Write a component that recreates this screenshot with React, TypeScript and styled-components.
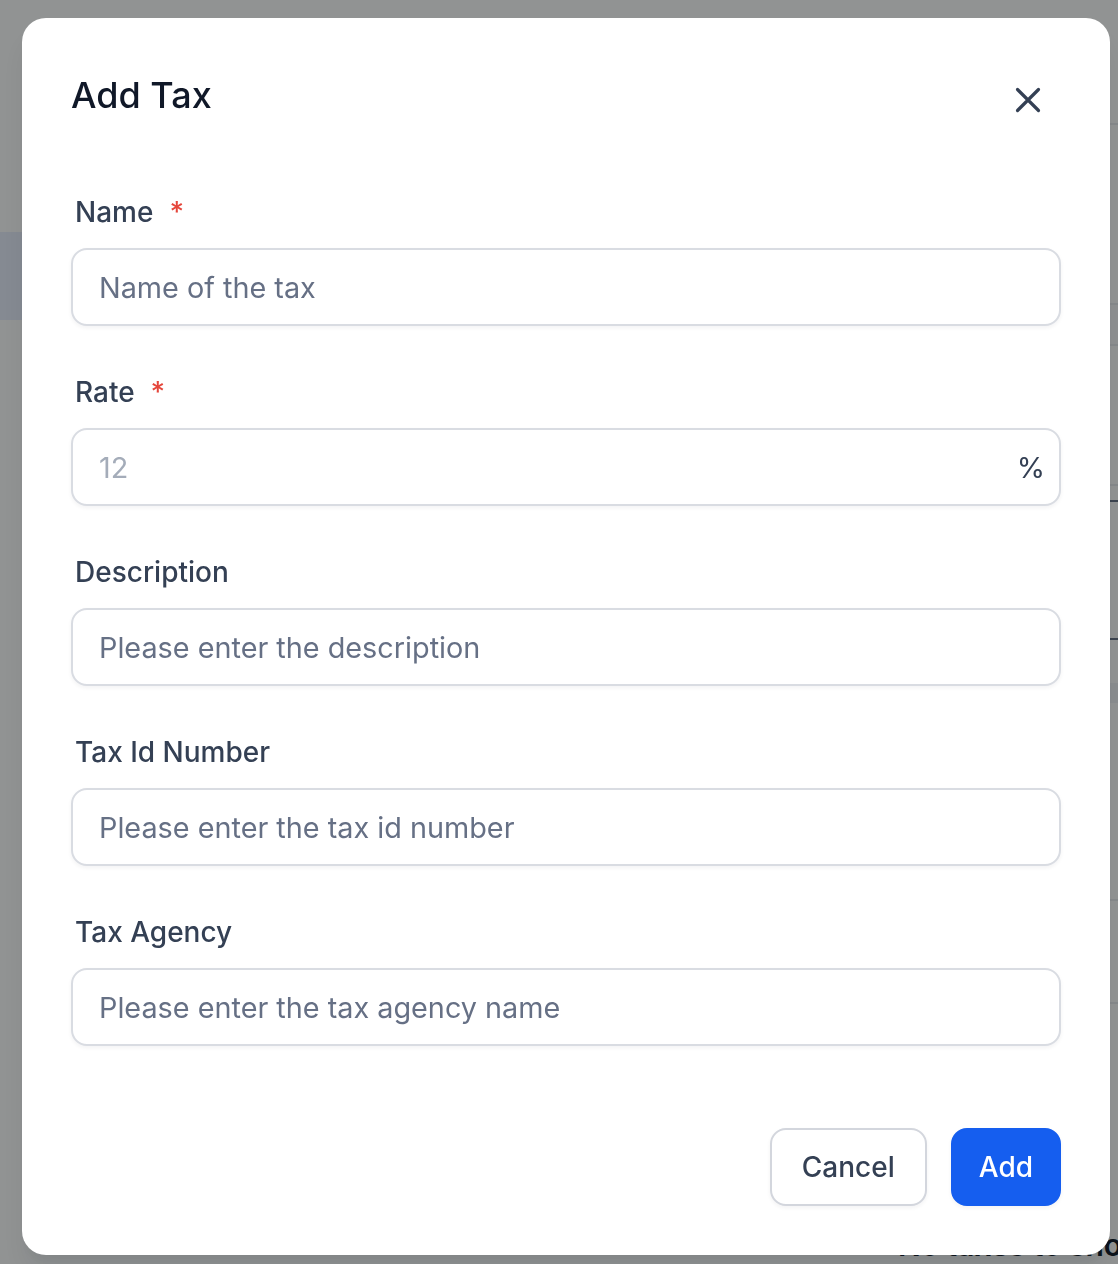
import styled, { createGlobalStyle } from 'styled-components';

const GlobalStyle = createGlobalStyle`
  html, body {
    margin: 0;
    padding: 0;
  }
  body {
    font-family: 'Inter', 'Noto Sans', sans-serif;
    overflow: hidden;
  }
  * {
    box-sizing: border-box;
  }
`;

/* ---------- page behind the dialog ---------- */

const Page = styled.div`
  display: flex;
  width: 100vw;
  height: 100vh;
  background: #fff;
`;

const Sidebar = styled.aside`
  width: 240px;
  flex-shrink: 0;
  padding-top: 232px;
`;

const NavItem = styled.div<{ $active?: boolean }>`
  height: 88px;
  background: ${(p) => (p.$active ? '#e9effd' : 'transparent')};
`;

const Main = styled.main`
  flex: 1;
  display: flex;
  flex-direction: column;
`;

const Band = styled.div<{ $h: number; $line?: string; $bg?: string }>`
  height: ${(p) => p.$h}px;
  flex-shrink: 0;
  background: ${(p) => p.$bg ?? 'transparent'};
  border-bottom: 2px solid ${(p) => p.$line ?? 'transparent'};
`;

const EmptyText = styled.div`
  padding-left: 658px;
  font-size: 30px;
  line-height: 36px;
  font-weight: 600;
  color: #101828;
  white-space: nowrap;
`;

const rows: { h: number; line?: string; bg?: string }[] = [
  { h: 125, line: '#eaecf0' },
  { h: 180, line: '#eaecf0' },
  { h: 41, line: '#eaecf0', bg: '#f9fafb' },
  { h: 140, line: '#eaecf0' },
  { h: 16, line: '#667085' },
  { h: 138, line: '#667085' },
  { h: 43 },
  { h: 20, bg: '#f2f4f7' },
  { h: 198, line: '#eaecf0' },
  { h: 103, line: '#eaecf0' },
  { h: 223 },
];

/* ---------- dialog ---------- */

const Backdrop = styled.div`
  position: fixed;
  inset: 0;
  display: flex;
  align-items: flex-start;
  padding: 18px 0 0 22px;
  background: rgba(10, 16, 16, 0.45);
`;

const Dialog = styled.div`
  width: 1088px;
  padding: 55px 49px 49px;
  background: #fff;
  border-radius: 24px;
  box-shadow: 0 20px 24px -4px rgba(16, 24, 40, 0.08),
    0 8px 8px -4px rgba(16, 24, 40, 0.03);
`;

const Header = styled.div`
  display: flex;
  justify-content: space-between;
  align-items: flex-start;
  margin-bottom: 70px;
`;

const Title = styled.h2`
  margin: 0;
  font-size: 36px;
  line-height: 44px;
  font-weight: 500;
  color: #101828;
`;

const CloseButton = styled.button`
  display: flex;
  align-items: center;
  justify-content: center;
  width: 44px;
  height: 44px;
  margin: 5px 11px 0 0;
  padding: 0;
  border: 0;
  background: none;
  color: #344054;
  cursor: pointer;
`;

const Form = styled.form`
  display: flex;
  flex-direction: column;
  gap: 46px;
`;

const Field = styled.div`
  display: flex;
  flex-direction: column;
  gap: 16px;
`;

const Label = styled.label`
  display: block;
  padding-left: 4px;
  font-size: 28px;
  line-height: 40px;
  font-weight: 500;
  color: #344054;
`;

const Required = styled.span`
  margin-left: 16px;
  color: #e5463b;
`;

const InputShell = styled.div`
  display: flex;
  align-items: center;
  height: 78px;
  padding: 0 14px 0 26px;
  background: #fff;
  border: 2px solid #d9dce2;
  border-radius: 16px;
  box-shadow: 0 2px 4px rgba(16, 24, 40, 0.05);
`;

const TextInput = styled.input<{ $muted?: boolean }>`
  flex: 1;
  min-width: 0;
  padding: 0;
  border: 0;
  outline: 0;
  background: transparent;
  font-family: inherit;
  font-size: 28.8px;
  color: #101828;

  &::placeholder {
    color: ${(p) => (p.$muted ? '#a4acb9' : '#667085')};
    opacity: 1;
  }
`;

const Suffix = styled.span`
  font-size: 28.8px;
  color: #344054;
`;

const Footer = styled.div`
  display: flex;
  justify-content: flex-end;
  gap: 24px;
  margin-top: 82px;
`;

const Button = styled.button<{ $primary?: boolean }>`
  height: 78px;
  padding: 0 ${(p) => (p.$primary ? 26 : 30)}px;
  border-radius: 16px;
  border: 2px solid ${(p) => (p.$primary ? '#155eef' : '#d3d6dd')};
  background: ${(p) => (p.$primary ? '#155eef' : '#fff')};
  color: ${(p) => (p.$primary ? '#fff' : '#344054')};
  font-family: inherit;
  font-size: 28px;
  font-weight: 500;
  box-shadow: 0 2px 4px rgba(16, 24, 40, 0.05);
  cursor: pointer;
`;

const CloseIcon = () => (
  <svg width="28" height="28" viewBox="0 0 28 28" fill="none">
    <path
      d="M3.5 3.5l21 21M24.5 3.5l-21 21"
      stroke="currentColor"
      strokeWidth="3.2"
      strokeLinecap="round"
    />
  </svg>
);

interface FieldDef {
  id: string;
  label: string;
  placeholder: string;
  required?: boolean;
  muted?: boolean;
  suffix?: string;
}

const fields: FieldDef[] = [
  { id: 'name', label: 'Name', placeholder: 'Name of the tax', required: true },
  { id: 'rate', label: 'Rate', placeholder: '12', required: true, muted: true, suffix: '%' },
  { id: 'description', label: 'Description', placeholder: 'Please enter the description' },
  { id: 'taxId', label: 'Tax Id Number', placeholder: 'Please enter the tax id number' },
  { id: 'agency', label: 'Tax Agency', placeholder: 'Please enter the tax agency name' },
];

export default function App() {
  return (
    <>
      <GlobalStyle />
      <Page>
        <Sidebar>
          <NavItem $active />
        </Sidebar>
        <Main>
          {rows.map((r, i) => (
            <Band key={i} $h={r.h} $line={r.line} $bg={r.bg} />
          ))}
          <EmptyText>No taxes to show</EmptyText>
        </Main>
      </Page>
      <Backdrop>
        <Dialog role="dialog" aria-labelledby="add-tax-title">
          <Header>
            <Title id="add-tax-title">Add Tax</Title>
            <CloseButton type="button" aria-label="Close">
              <CloseIcon />
            </CloseButton>
          </Header>
          <Form onSubmit={(e) => e.preventDefault()}>
            {fields.map((f) => (
              <Field key={f.id}>
                <Label htmlFor={f.id}>
                  {f.label}
                  {f.required && <Required>*</Required>}
                </Label>
                <InputShell>
                  <TextInput id={f.id} placeholder={f.placeholder} $muted={f.muted} />
                  {f.suffix && <Suffix>{f.suffix}</Suffix>}
                </InputShell>
              </Field>
            ))}
          </Form>
          <Footer>
            <Button type="button">Cancel</Button>
            <Button type="button" $primary>
              Add
            </Button>
          </Footer>
        </Dialog>
      </Backdrop>
    </>
  );
}
